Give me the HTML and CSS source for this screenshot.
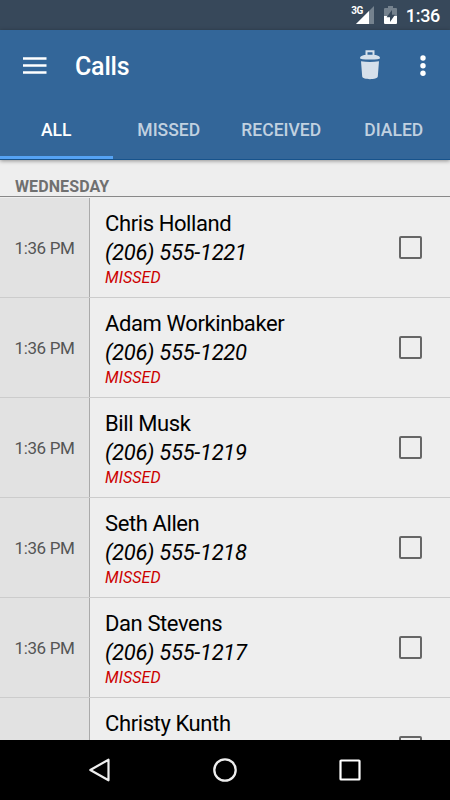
FILE: index.html
```html
<!DOCTYPE html>
<html lang="en">
<head>
  <meta charset="UTF-8" />
  <meta name="viewport" content="width=device-width,initial-scale=1" />
  <title>Calls</title>
  <link rel="stylesheet" href="styles.css">
</head>
<body>
  <div class="status-bar">
    <span class="network">3G</span>
    <svg class="signal" width="18" height="18" viewBox="0 0 18 18">
      <path d="M0 18L18 0V18z" fill="#75828e" />
      <path d="M0 18L13 5V18z" fill="#fff" />
    </svg>
    <svg class="battery" width="13" height="18" viewBox="0 0 13 18">
      <path d="M1 2H4V0H9V2H12Q13 2 13 3V10H0V3Q0 2 1 2z" fill="#75828e" />
      <path d="M0 10H13V17Q13 18 12 18H1Q0 18 0 17z" fill="#fff" />
      <path d="M8 4L2.5 11.2H6V16L11 8.8H8z" fill="#37485a" />
    </svg>
    <span class="clock">1:36</span>
  </div>

  <header>
    <div class="toolbar">
      <svg class="menu" width="24" height="17" viewBox="0 0 24 17">
        <path d="M0 1.5H23.5M0 8.5H23.5M0 15.5H23.5" stroke="#fff" stroke-width="2.5" />
      </svg>
      <h1>Calls</h1>
      <svg class="trash" width="20" height="30" viewBox="0 0 20 30">
        <path d="M6.5 5V1.2H13.5V5" fill="none" stroke="#d6e0eb" stroke-width="2" />
        <path d="M0 8.3C0 5.5 4 4.8 10 4.8S20 5.5 20 8.3Q20 9.6 10 9.6T0 8.3z" fill="#d6e0eb" />
        <path d="M1 11.2Q10 12.8 19 11.2L17.8 26.5C17.6 30 2.4 30 2.2 26.5z" fill="#d6e0eb" />
      </svg>
      <svg class="more" width="6" height="22" viewBox="0 0 6 22">
        <circle cx="3" cy="3" r="2.7" fill="#fff" />
        <circle cx="3" cy="10.7" r="2.7" fill="#fff" />
        <circle cx="3" cy="18.2" r="2.7" fill="#fff" />
      </svg>
    </div>
    <nav class="tabs">
      <a class="tab active">ALL</a>
      <a class="tab">MISSED</a>
      <a class="tab">RECEIVED</a>
      <a class="tab">DIALED</a>
    </nav>
  </header>

  <main>
    <h2>WEDNESDAY</h2>
    <ul class="calls">
      <li class="call">
        <div class="time">1:36 PM</div>
        <div class="details">
          <div class="name">Chris Holland</div>
          <div class="number">(206) 555-1221</div>
          <div class="type">MISSED</div>
        </div>
        <span class="check"></span>
      </li>
      <li class="call">
        <div class="time">1:36 PM</div>
        <div class="details">
          <div class="name">Adam Workinbaker</div>
          <div class="number">(206) 555-1220</div>
          <div class="type">MISSED</div>
        </div>
        <span class="check"></span>
      </li>
      <li class="call">
        <div class="time">1:36 PM</div>
        <div class="details">
          <div class="name">Bill Musk</div>
          <div class="number">(206) 555-1219</div>
          <div class="type">MISSED</div>
        </div>
        <span class="check"></span>
      </li>
      <li class="call">
        <div class="time">1:36 PM</div>
        <div class="details">
          <div class="name">Seth Allen</div>
          <div class="number">(206) 555-1218</div>
          <div class="type">MISSED</div>
        </div>
        <span class="check"></span>
      </li>
      <li class="call">
        <div class="time">1:36 PM</div>
        <div class="details">
          <div class="name">Dan Stevens</div>
          <div class="number">(206) 555-1217</div>
          <div class="type">MISSED</div>
        </div>
        <span class="check"></span>
      </li>
      <li class="call">
        <div class="time"></div>
        <div class="details">
          <div class="name">Christy Kunth</div>
        </div>
        <span class="check"></span>
      </li>
    </ul>
  </main>

  <footer class="nav-bar">
    <svg width="26" height="26" viewBox="0 0 26 26">
      <path d="M3.3 13L21.5 2.7V23.3z" fill="none" stroke="#eee" stroke-width="2.2" stroke-linejoin="round" />
    </svg>
    <svg width="26" height="26" viewBox="0 0 26 26">
      <circle cx="13" cy="13" r="10.7" fill="none" stroke="#eee" stroke-width="2.3" />
    </svg>
    <svg width="26" height="26" viewBox="0 0 26 26">
      <rect x="3.5" y="3.5" width="19" height="19" rx="0.6" fill="none" stroke="#fff" stroke-width="2.2" />
    </svg>
  </footer>
</body>
</html>
```
FILE: styles.css
```css
body {
  font-family: Roboto, "Liberation Sans", sans-serif;
  margin: 0;
  height: 800px;
  display: flex;
  flex-direction: column;
  overflow: hidden;
  background: #eee;
  color: #000;
}
.status-bar {
  height: 30px;
  flex-shrink: 0;
  box-sizing: border-box;
  padding-right: 10px;
  display: flex;
  align-items: center;
  justify-content: flex-end;
  background: #37485a;
  color: #fff;
}
.network {
  font-size: 10px;
  line-height: 10px;
  font-weight: bold;
  letter-spacing: -0.5px;
  margin: 0 -7px 9px 0;
}
.battery {
  margin: 0 9px 0 10px;
}
.clock {
  font-size: 18px;
  font-weight: 500;
  letter-spacing: -0.3px;
}
header {
  height: 130px;
  flex-shrink: 0;
  box-sizing: border-box;
  background: #336699;
  border-bottom: 1px solid #17538c;
  box-shadow: 0 1px 4px rgba(0,0,0,0.4);
  position: relative;
  color: #fff;
}
.toolbar {
  height: 70px;
  padding: 0 24px 0 23px;
  display: flex;
  align-items: center;
}
.toolbar h1 {
  flex: 1;
  margin: 2px 0 0 28px;
  font-size: 25px;
  font-weight: 500;
  letter-spacing: -0.2px;
}
.more {
  margin: 1px 0 0 40px;
}
.tabs {
  display: grid;
  grid-template-columns: repeat(4, 1fr);
  height: 59px;
}
.tab {
  box-sizing: border-box;
  border-bottom: 3px solid transparent;
  padding-top: 4px;
  display: flex;
  align-items: center;
  justify-content: center;
  font-size: 17.5px;
  font-weight: 500;
  color: #c1d1e0;
}
.tab.active {
  color: #fff;
  border-bottom-color: #55a3f5;
}
main {
  flex: 1;
  min-height: 0;
  overflow: hidden;
}
h2 {
  box-sizing: border-box;
  height: 37px;
  margin: 0 0 1px;
  padding: 18px 15px 0;
  border-bottom: 1px solid #888;
  font-size: 16px;
  line-height: 18px;
  font-weight: bold;
  letter-spacing: 0.1px;
  color: #707070;
}
.calls {
  list-style: none;
  margin: 0;
  padding: 0;
}
.call {
  box-sizing: border-box;
  height: 100px;
  border-bottom: 1px solid #ccc;
  display: flex;
  align-items: center;
}
.time {
  box-sizing: border-box;
  width: 90px;
  height: 100%;
  border-right: 1px solid #aaa;
  background: #e2e2e2;
  display: flex;
  align-items: center;
  justify-content: center;
  font-size: 17px;
  letter-spacing: -0.35px;
  color: #555;
}
.details {
  flex: 1;
  align-self: flex-start;
  padding: 12px 0 0 15px;
}
.name,
.number {
  font-size: 22px;
  line-height: 28px;
  letter-spacing: -0.4px;
}
.number {
  padding-top: 1px;
  font-style: italic;
  letter-spacing: -0.3px;
}
.type {
  font-size: 16px;
  line-height: 22px;
  font-style: italic;
  letter-spacing: 0.1px;
  color: #c00;
}
.check {
  box-sizing: border-box;
  width: 23px;
  height: 23px;
  margin-right: 28px;
  border: 2px solid #666;
  border-radius: 2px;
}
.nav-bar {
  height: 60px;
  flex-shrink: 0;
  background: #000;
  display: flex;
  align-items: center;
  justify-content: center;
  gap: 99px;
}
```
